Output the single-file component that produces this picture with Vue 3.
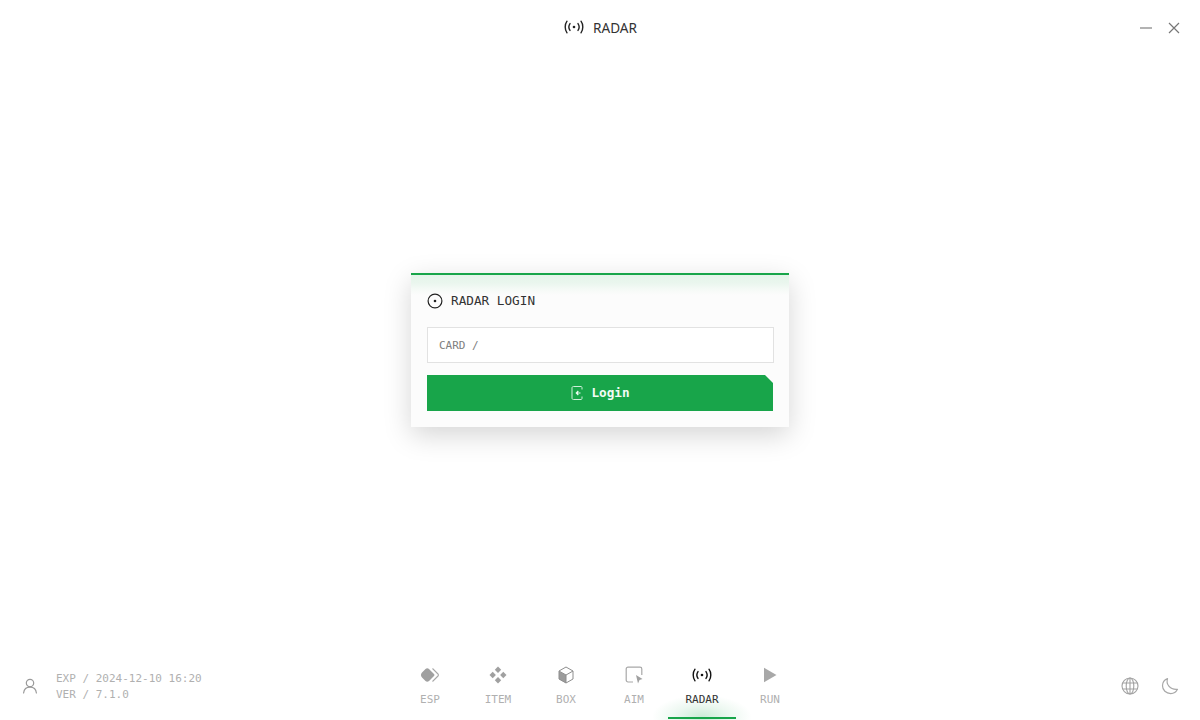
<script setup>
const tabs = [
  { key: 'esp', label: 'ESP' },
  { key: 'item', label: 'ITEM' },
  { key: 'box', label: 'BOX' },
  { key: 'aim', label: 'AIM' },
  { key: 'radar', label: 'RADAR', active: true },
  { key: 'run', label: 'RUN' },
]
</script>

<template>
  <div class="app">
    <header class="top">
      <div class="title">
        <svg class="radar-icon" viewBox="0 0 22 16" width="22" height="16" fill="none" stroke="currentColor" stroke-width="1.4" stroke-linecap="round">
          <path d="M4 2.2C1.6 5.5 1.6 10.5 4 13.8" />
          <path d="M7 4.6C5.7 6.500 5.700 9.500 7 11.400" />
          <path d="M18 2.200C20.400 5.500 20.400 10.500 18 13.800" />
          <path d="M15 4.600C16.300 6.500 16.300 9.500 15 11.400" />
          <circle cx="11" cy="8" r="1.300" fill="currentColor" stroke="none" />
        </svg>
        <span>RADAR</span>
      </div>
      <div class="win">
        <svg viewBox="0 0 14 14" width="14" height="14" fill="none" stroke="#8a8a8a" stroke-width="1.3"><path d="M1 7H13" /></svg>
        <svg viewBox="0 0 14 14" width="14" height="14" fill="none" stroke="#777" stroke-width="1.2"><path d="M2 2L12 12M12 2L2 12" /></svg>
      </div>
    </header>

    <main class="main">
      <section class="card">
        <div class="card-head">
          <svg viewBox="0 0 16 16" width="16" height="16" fill="none" stroke="#222" stroke-width="1.2">
            <circle cx="8" cy="8" r="6.900" />
            <circle cx="8" cy="8" r="1.300" fill="#222" stroke="none" />
          </svg>
          <span>RADAR LOGIN</span>
        </div>
        <div class="field">CARD /</div>
        <button class="login" type="button">
          <svg viewBox="0 0 14 16" width="14" height="16" fill="none" stroke="#cfeeda" stroke-width="1">
            <path d="M11 1.500H3.500C2.500 1.500 2 2 2 3V13C2 14 2.500 14.500 3.500 14.500H11C11.800 14.500 12 14 12 13V11.500" />
            <path d="M12 4.500V3C12 2 11.800 1.500 11 1.500" />
            <path d="M10.500 8H6.500M8.300 6L6.300 8L8.300 10" stroke="#eefaf2" stroke-width="1.200" />
          </svg>
          <span>Login</span>
        </button>
      </section>
    </main>

    <footer class="bottom">
      <div class="info">
        <svg viewBox="0 0 16 16" width="16" height="16" fill="none" stroke="#9a9a9a" stroke-width="1.2" stroke-linecap="round">
          <circle cx="8" cy="5" r="3.700" />
          <path d="M1.600 15C2 11.600 4.200 9.200 8 9.200S14 11.600 14.400 15" />
        </svg>
        <div class="lines">
          <div>EXP / 2024-12-10 16:20</div>
          <div>VER / 7.1.0</div>
        </div>
      </div>

      <nav class="tabs">
        <div v-for="t in tabs" :key="t.key" class="tab" :class="{ active: t.active }">
          <svg v-if="t.key === 'esp'" viewBox="0 0 20 16" width="20" height="16">
            <path d="M12.500 1.500L18 7C18.600 7.600 18.600 8.400 18 9L12.500 14.500" fill="none" stroke="#a8a8a8" stroke-width="1.100" />
            <path d="M5.500 2C6.500 1 8 1 9 2L14 7C14.600 7.600 14.600 8.400 14 9L9 14C8 15 6.500 15 5.500 14L2 10.500C.6 9 .6 7 2 5.500Z" fill="#a0a0a0" />
          </svg>
          <svg v-else-if="t.key === 'item'" viewBox="0 0 18 18" width="18" height="18" fill="#a0a0a0">
            <path d="M9 .5L12.200 3.700L9 6.900L5.800 3.700Z" />
            <path d="M3.700 5.800L6.900 9L3.700 12.200L.5 9Z" />
            <path d="M14.300 5.800L17.500 9L14.300 12.200L11.100 9Z" />
            <path d="M9 11.100L12.200 14.300L9 17.500L5.800 14.300Z" />
          </svg>
          <svg v-else-if="t.key === 'box'" viewBox="0 0 18 18" width="18" height="18">
            <path d="M2 5.200L9 9V17L2 13.200Z" fill="#9c9c9c" />
            <path d="M9 1L16 5V13L9 17L2 13V5ZM2 5L9 9L16 5M9 9V17" fill="none" stroke="#8e8e8e" stroke-width="1" />
          </svg>
          <svg v-else-if="t.key === 'aim'" viewBox="0 0 18 18" width="18" height="18">
            <path d="M8 16H3C2 16 1.200 15.200 1.200 14V3C1.200 2 2 1.200 3 1.200H15C16 1.200 16.800 2 16.800 3V9" fill="none" stroke="#a8a8a8" stroke-width="1.200" />
            <path d="M11 9L17.500 13L14.500 14L13 17.500Z" fill="#a0a0a0" />
          </svg>
          <svg v-else-if="t.key === 'radar'" class="radar-icon" viewBox="0 0 22 16" width="22" height="16" fill="none" stroke="#111" stroke-width="1.400" stroke-linecap="round">
            <path d="M4 2.200C1.600 5.500 1.600 10.500 4 13.800" />
            <path d="M7 4.600C5.700 6.500 5.700 9.500 7 11.400" />
            <path d="M18 2.200C20.400 5.500 20.400 10.500 18 13.800" />
            <path d="M15 4.600C16.300 6.500 16.300 9.500 15 11.400" />
            <circle cx="11" cy="8" r="1.300" fill="#111" stroke="none" />
          </svg>
          <svg v-else viewBox="0 0 16 16" width="16" height="16" fill="#a8a8a8"><path d="M2 .800L14.500 8L2 15.200Z" /></svg>
          <span class="label">{{ t.label }}</span>
        </div>
      </nav>

      <div class="tools">
        <svg viewBox="0 0 18 18" width="18" height="18" fill="none" stroke="#a2a2a2" stroke-width="1.100">
          <circle cx="9" cy="9" r="8" />
          <ellipse cx="9" cy="9" rx="3.800" ry="8" />
          <path d="M9 1V17M1.800 6H16.200M1.800 12H16.200" />
        </svg>
        <svg viewBox="0 0 18 18" width="18" height="18" fill="none" stroke="#a8a8a8" stroke-width="1.200" stroke-linejoin="round">
          <path d="M6.500 1.500C4.800 6.800 8.500 13 16.500 12.300C15 15.200 12.500 16.600 9.800 16.600C5 16.600 1.500 13 1.500 8.800C1.500 5.500 3.500 2.800 6.500 1.500Z" />
        </svg>
      </div>
    </footer>
  </div>
</template>

<style>
html, body { margin: 0; background: #fff; }
</style>

<style scoped>
.app {
  width: 1200px;
  height: 720px;
  display: flex;
  flex-direction: column;
  overflow: hidden;
  background: #fff;
  font-family: "DejaVu Sans Mono", "Liberation Mono", monospace;
}
.top {
  height: 54px;
  padding-bottom: 2px;
  flex: none;
  display: flex;
  align-items: center;
  justify-content: center;
  position: relative;
}
.title {
  display: flex;
  align-items: center;
  gap: 8px;
  color: #333;
  font-family: "Noto Sans", sans-serif;
  font-size: 13.6px;
}
.radar-icon { color: #222; }
.win {
  position: absolute;
  right: 19px;
  top: 21px;
  display: flex;
  gap: 14px;
}
.main {
  flex: 1;
  display: flex;
  align-items: center;
  justify-content: center;
}
.card {
  width: 378px;
  height: 154px;
  box-sizing: border-box;
  border-top: 2px solid #18a54a;
  padding: 0 16px;
  background: linear-gradient(#e4f4ea, #eaf6ee 8px, #f6faf7 15px, #fcfcfc 20px);
  box-shadow: 0 8px 26px rgba(0, 0, 0, 0.17);
  display: flex;
  flex-direction: column;
}
.card-head {
  height: 52px;
  flex: none;
  display: flex;
  align-items: center;
  gap: 8px;
  font-size: 12.7px;
  color: #333;
}
.card-head span { margin-top: -1px; }
.field {
  width: 347px;
  height: 36px;
  box-sizing: border-box;
  flex: none;
  border: 1px solid #e2e2e2;
  background: #fff;
  padding: 1px 0 0 11px;
  display: flex;
  align-items: center;
  font-size: 11px;
  color: #808080;
}
.login {
  margin-top: 12px;
  width: 346px;
  height: 36px;
  flex: none;
  border: 0;
  padding: 0 0 2px;
  background: #18a54a;
  clip-path: polygon(0 0, 338px 0, 100% 8px, 100% 100%, 0 100%);
  color: #f2fbf5;
  font-family: "DejaVu Sans Mono", monospace;
  font-weight: 700;
  font-size: 12.7px;
  display: flex;
  align-items: center;
  justify-content: center;
  gap: 7px;
}
.login svg { margin-top: 2px; }
.bottom {
  height: 76px;
  flex: none;
  display: grid;
  grid-template-columns: 1fr auto 1fr;
  align-items: start;
  position: relative;
}
.info {
  display: flex;
  align-items: center;
  gap: 18px;
  padding: 27px 0 0 22px;
  color: #b0b0b0;
  font-size: 11px;
  line-height: 16px;
}
.info svg { margin-top: -3px; }
.tabs { display: flex; }
.tab {
  width: 68px;
  height: 75px;
  box-sizing: border-box;
  padding-top: 22px;
  display: flex;
  flex-direction: column;
  align-items: center;
  color: #b0b0b0;
  font-size: 11px;
  position: relative;
}
.tab svg { height: 18px; flex: none; position: relative; }
.label { margin-top: 9px; line-height: 14px; position: relative; }
.tab.active {
  color: #333;
  border-bottom: 2px solid #18a54a;
}
.tab.active::before {
  content: "";
  position: absolute;
  left: -16px;
  right: -16px;
  bottom: -22px;
  height: 44px;
  background: radial-gradient(ellipse 50% 50% at 50% 50%, rgba(24, 165, 74, 0.22), rgba(24, 165, 74, 0.08) 55%, rgba(24, 165, 74, 0) 100%);
}
.tools {
  display: flex;
  justify-content: flex-end;
  gap: 22px;
  padding: 33px 21px 0 0;
}
</style>
